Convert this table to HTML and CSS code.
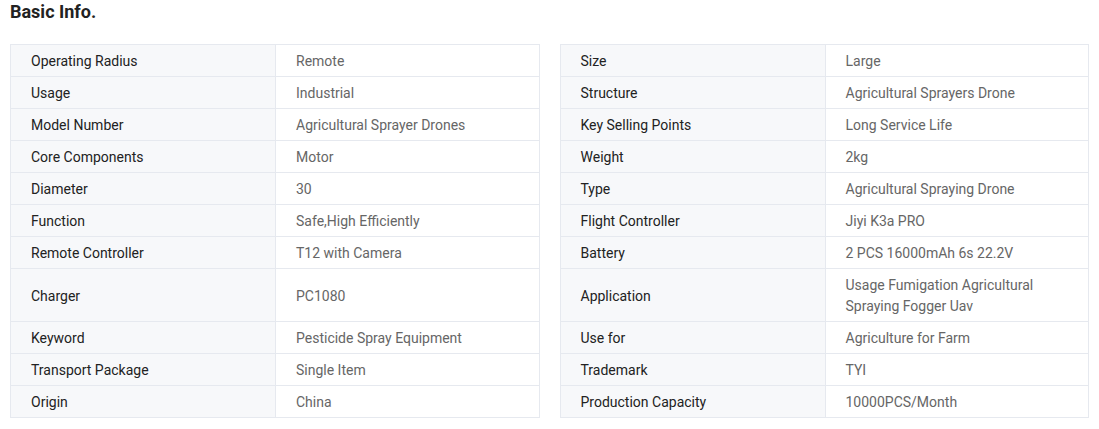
FILE: index.html
```html
<!DOCTYPE html>
<html>
<head>
<meta charset="utf-8">
<link rel="stylesheet" href="styles.css">
</head>
<body>
<h2 class="title">Basic Info.</h2>
<div class="tables">
  <table class="info">
    <tr><td class="k">Operating Radius</td><td class="v">Remote</td></tr>
    <tr><td class="k">Usage</td><td class="v">Industrial</td></tr>
    <tr><td class="k">Model Number</td><td class="v">Agricultural Sprayer Drones</td></tr>
    <tr><td class="k">Core Components</td><td class="v">Motor</td></tr>
    <tr><td class="k">Diameter</td><td class="v">30</td></tr>
    <tr><td class="k">Function</td><td class="v">Safe,High Efficiently</td></tr>
    <tr><td class="k">Remote Controller</td><td class="v">T12 with Camera</td></tr>
    <tr class="tall"><td class="k">Charger</td><td class="v">PC1080</td></tr>
    <tr><td class="k">Keyword</td><td class="v">Pesticide Spray Equipment</td></tr>
    <tr><td class="k">Transport Package</td><td class="v">Single Item</td></tr>
    <tr><td class="k">Origin</td><td class="v">China</td></tr>
  </table>
  <table class="info">
    <tr><td class="k">Size</td><td class="v">Large</td></tr>
    <tr><td class="k">Structure</td><td class="v">Agricultural Sprayers Drone</td></tr>
    <tr><td class="k">Key Selling Points</td><td class="v">Long Service Life</td></tr>
    <tr><td class="k">Weight</td><td class="v">2kg</td></tr>
    <tr><td class="k">Type</td><td class="v">Agricultural Spraying Drone</td></tr>
    <tr><td class="k">Flight Controller</td><td class="v">Jiyi K3a PRO</td></tr>
    <tr><td class="k">Battery</td><td class="v">2 PCS 16000mAh 6s 22.2V</td></tr>
    <tr class="tall"><td class="k">Application</td><td class="v">Usage Fumigation Agricultural Spraying Fogger Uav</td></tr>
    <tr><td class="k">Use for</td><td class="v">Agriculture for Farm</td></tr>
    <tr><td class="k">Trademark</td><td class="v">TYI</td></tr>
    <tr><td class="k">Production Capacity</td><td class="v">10000PCS/Month</td></tr>
  </table>
</div>
</body>
</html>
```
FILE: styles.css
```css
* { box-sizing: border-box; }
body {
  margin: 0;
  padding: 0 10px;
  font-family: Roboto, "Liberation Sans", sans-serif;
  background: #fff;
}
.title {
  margin: 0;
  padding-top: 1px;
  font-size: 18px;
  line-height: 22px;
  font-weight: 700;
  color: #222;
}
.tables {
  display: flex;
  align-items: flex-start;
  gap: 20px;
  margin-top: 21px;
}
.info {
  width: 530px;
  border-collapse: collapse;
  table-layout: fixed;
  font-size: 14px;
  line-height: 21px;
}
.info tr { height: 32px; }
.info tr.tall { height: 53px; }
.info td {
  border: 1px solid #e6e9ef;
  padding: 6px 20px 4px;
  vertical-align: middle;
}
.info .k {
  width: 265px;
  background: #f7f8fa;
  color: #222;
}
.info .v {
  background: #fff;
  color: #666;
}
```
